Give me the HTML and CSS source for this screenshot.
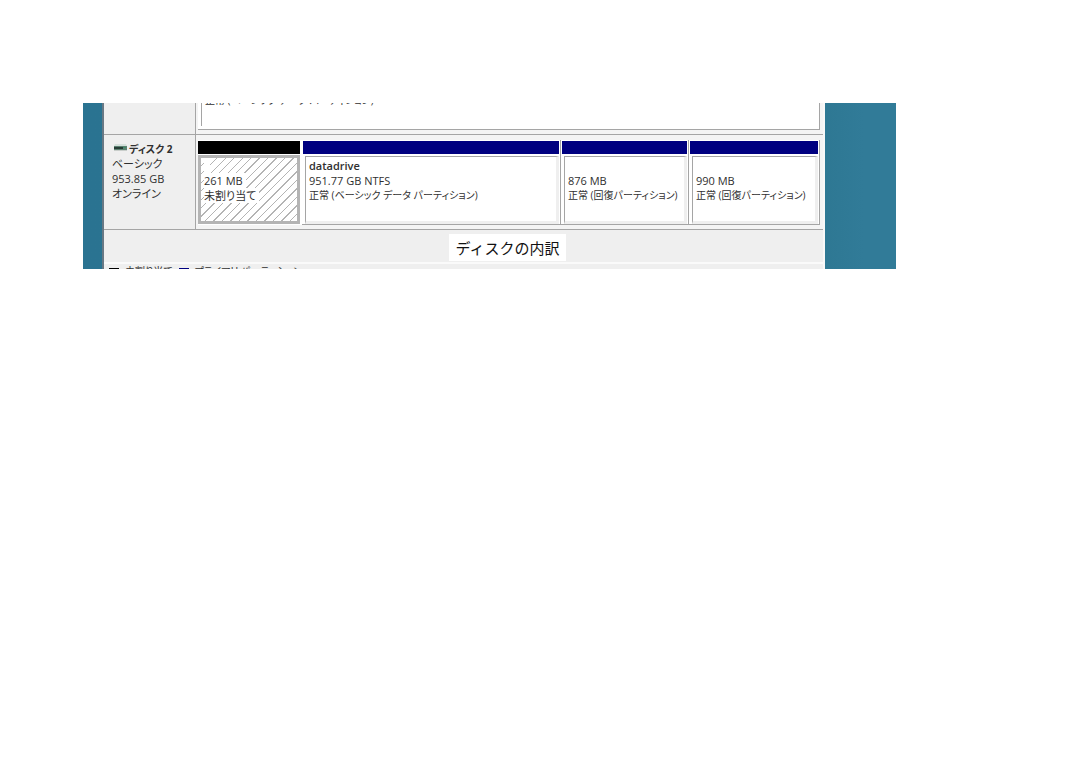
FILE: index.html
```
<!DOCTYPE html>
<html lang="ja">

<head>
    <meta charset="utf-8">
    <title>ディスクの内訳</title>
    <link rel="stylesheet" href="styles.css">
</head>

<body>

    <main class="desktop">
        <div class="window">
            <section class="disk disk-above">
                <div class="disk-info"></div>
                <div class="partitions">
                    <div class="volume">
                        <p class="volume-text">正常 (ベーシック データ パーティション)</p>
                    </div>
                </div>
            </section>

            <section class="disk">
                <div class="disk-info">
                    <h2 class="disk-name">
                        <svg class="disk-icon" width="13" height="8" viewBox="0 0 13 8" aria-hidden="true">
                            <path d="M1 0h11l1 2H0z" fill="#d5e0db" />
                            <path d="M0 2h13v4H0z" fill="#5d8272" />
                            <path d="M0 3h9v2H0z" fill="#263d35" />
                            <path d="M9 3h3v1H9z" fill="#3f8a68" />
                            <path d="M0 6h13v1H0z" fill="#c9cecb" />
                        </svg>
                        ディスク 2
                    </h2>
                    <p>ベーシック</p>
                    <p>953.85 GB</p>
                    <p>オンライン</p>
                </div>
                <div class="partitions">
                    <div class="partition unallocated">
                        <div class="bar"></div>
                        <div class="box">
                            <p><span>&nbsp;</span></p>
                            <p><span>261 MB</span></p>
                            <p><span>未割り当て</span></p>
                        </div>
                    </div>
                    <div class="partition">
                        <div class="bar"></div>
                        <div class="box">
                            <p><strong>datadrive</strong></p>
                            <p>951.77 GB NTFS</p>
                            <p class="status">正常 (ベーシック データ パーティション)</p>
                        </div>
                    </div>
                    <div class="partition">
                        <div class="bar"></div>
                        <div class="box">
                            <p>&nbsp;</p>
                            <p>876 MB</p>
                            <p class="status">正常 (回復パーティション)</p>
                        </div>
                    </div>
                    <div class="partition">
                        <div class="bar"></div>
                        <div class="box">
                            <p>&nbsp;</p>
                            <p>990 MB</p>
                            <p class="status">正常 (回復パーティション)</p>
                        </div>
                    </div>
                </div>
            </section>

            <div class="caption-row">
                <h1 class="caption">ディスクの内訳</h1>
            </div>

            <!-- 凡例は上端だけ見える -->
            <div class="legend">
                <span class="swatch swatch-black"></span>
                <span class="legend-text">未割り当て</span>
                <span class="swatch swatch-navy"></span>
                <span class="legend-text">プライマリ パーティション</span>
            </div>
        </div>
    </main>

</body>

</html>
```
FILE: styles.css
```
* {
    box-sizing: border-box;
}

body {
    margin: 0;
    background: #fff;
    color: #303030;
    font-family: "Open Sans", "Noto Sans CJK JP", sans-serif;
    font-size: 11px;
    line-height: 15px;
    font-feature-settings: "palt";
}

h1,
h2,
p {
    margin: 0;
}

p {
    white-space: nowrap;
}

strong {
    font-weight: 600;
}

.desktop {
    margin: 103px 184px 0 83px;
    padding: 0 71px 0 19px;
    background: linear-gradient(90deg, #2a7391, #2d7792 90%, #317b98 96%);
}

.window {
    border-left: 2px solid #687884;
    border-right: 2px solid #f8f8f8;
    background: #efefef;
    overflow: hidden;
}

/* ディスクの行 */
.disk {
    display: flex;
    height: 95px;
    border-bottom: 1px solid #a5a5a5;
}

.disk-above {
    height: 32px;
}

.disk-info {
    flex: none;
    width: 92px;
    padding: 7px 0 0 8px;
    border-right: 1px solid #a5a5a5;
}

.disk-name {
    display: flex;
    align-items: center;
    gap: 2px;
    padding-left: 2px;
    font-size: 10px;
    font-weight: 700;
    line-height: 14px;
    white-space: nowrap;
}

.disk-icon {
    flex: none;
    margin-bottom: 2px;
}

.partitions {
    flex: 1;
    min-width: 0;
    display: grid;
    grid-template-columns: 104fr 259fr 128fr 131fr;
    padding: 5px 3px 4px 2px;
    background: #f4f4f4;
}

.disk-above .partitions {
    display: block;
    padding: 0 3px 4px 2px;
}

.volume {
    height: 27px;
    padding: 0 2px 3px 3px;
    border-right: 1px solid #a5a5a5;
    border-bottom: 1px solid #a5a5a5;
    background: #fff;
}

/* 上の行は文字の下端だけ残す */
.volume-text {
    display: flex;
    align-items: flex-end;
    height: 3px;
    padding-left: 3px;
    border-left: 1px solid #a5a5a5;
    font-size: 10px;
    line-height: 11px;
    overflow: hidden;
}

.volume::after {
    content: "";
    display: block;
    height: 20px;
    border-left: 1px solid #a5a5a5;
}

.partition {
    display: flex;
    flex-direction: column;
    min-width: 0;
    padding: 1px 1px 0 1px;
    border-right: 1px solid #a5a5a5;
    border-bottom: 1px solid #a5a5a5;
    background: #fff;
}

.bar {
    height: 13px;
    background: #000080;
}

.box {
    flex: 1;
    margin: 2px 0 0 2px;
    padding: 1px 0 0 3px;
    border-top: 1px solid #a5a5a5;
    border-left: 1px solid #a5a5a5;
    border-right: 3px solid #efefef;
    border-bottom: 3px solid #efefef;
    overflow: hidden;
}

.box p {
    height: 15px;
}

.status {
    font-size: 10px;
}

.unallocated {
    padding-left: 0;
    border-right: 1px solid #fff;
    border-bottom: 1px solid #fff;
}

.unallocated .bar {
    background: #000;
}

.unallocated .box {
    margin: 1px 0 0;
    padding: 0 0 0 3px;
    border: 3px solid #b4b4b4;
    background: repeating-linear-gradient(135deg, #fff 0, #fff 5px, #b4b4b4 5px, #b4b4b4 6px);
}

.unallocated span {
    display: inline-block;
    padding-right: 3px;
    background: #fff;
}

.caption-row {
    display: flex;
    justify-content: center;
    padding: 4px 0 1px 88px;
}

.caption {
    padding: 0 7px;
    background: #fff;
    color: #111;
    font-family: "Noto Sans CJK JP", sans-serif;
    font-size: 15px;
    font-weight: 400;
    line-height: 27px;
    font-feature-settings: normal;
}

.legend {
    display: flex;
    gap: 6px;
    height: 7px;
    padding: 4px 0 0 5px;
    border-top: 2px solid #fafafa;
    overflow: hidden;
    line-height: 8px;
    white-space: nowrap;
}

.swatch {
    width: 10px;
    height: 10px;
}

.swatch-black {
    background: #000;
}

.swatch-navy {
    background: #000080;
}

.legend-text {
    margin-top: -1px;
    font-size: 10px;
}
```
